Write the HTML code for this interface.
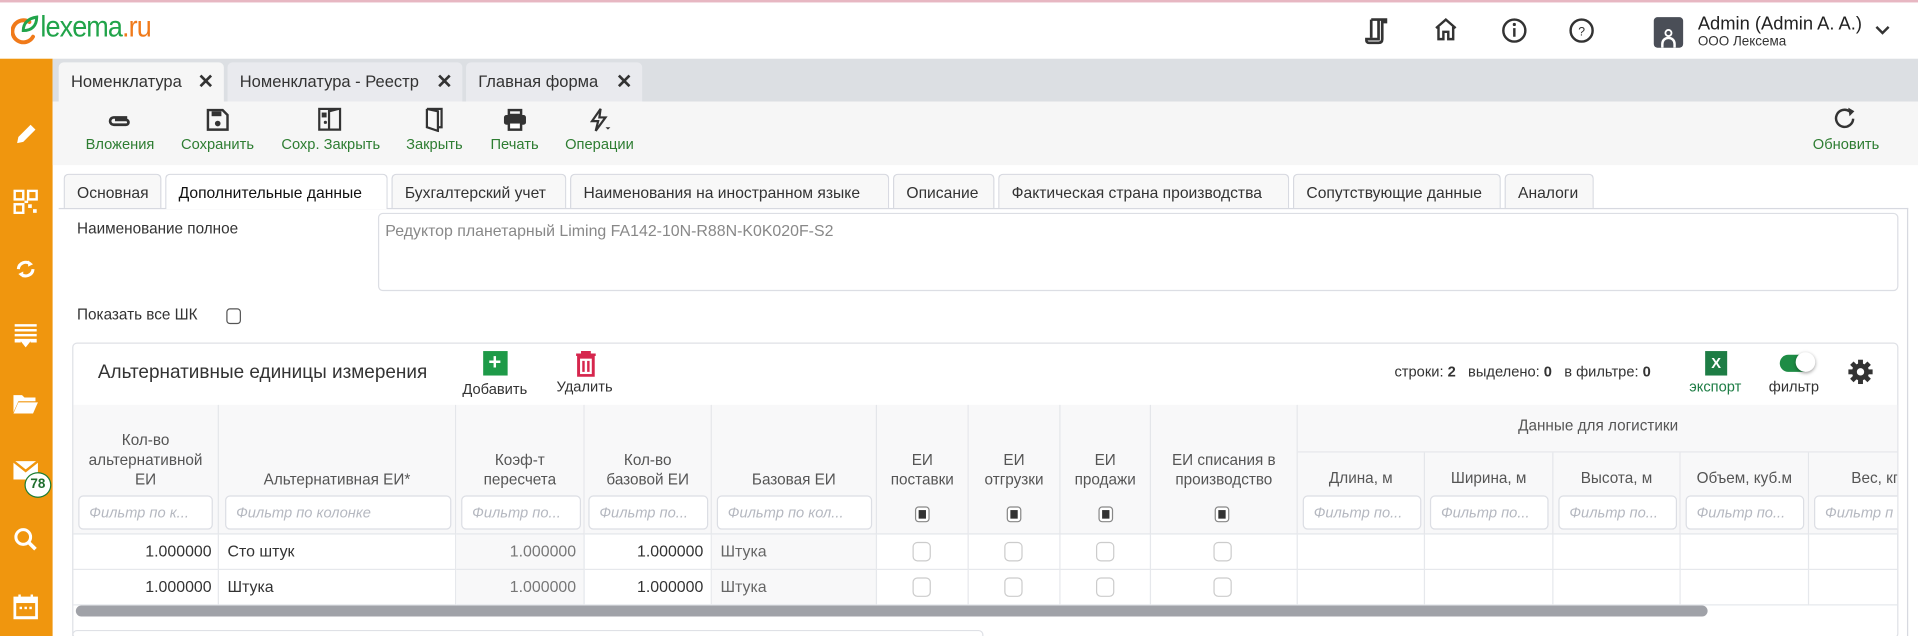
<!DOCTYPE html>
<html><head><meta charset="utf-8">
<style>
*{box-sizing:border-box;margin:0;padding:0}
html,body{width:1918px;height:636px;overflow:hidden;background:#fff;font-family:"Liberation Sans","Noto Sans CJK SC",sans-serif;color:#333}
#w{position:absolute;left:0;top:0;width:1568px;height:520px;transform:scale(1.22321);transform-origin:0 0;overflow:hidden}
.a{position:absolute}
.topline{left:0;top:0;width:1568px;height:2px;background:#e7b7c2}
.side{left:0;top:48px;width:43px;height:472px;background:#f0960e}
.tabbar{left:43px;top:48px;width:1525px;height:35px;background:#dcdfe3}
.tb{top:51px;height:32px;background:#e9eaee;border-radius:4px 4px 0 0;font-size:13.5px;color:#333;padding:8px 0 0 10px;white-space:nowrap}
.tb .x{position:absolute;right:8px;top:6px;font-size:16px;font-weight:bold;color:#333}
.tool{left:43px;top:83px;width:1525px;height:52px;background:#f6f6f6}
.tbtn{top:88px;text-align:center;font-size:12px;color:#2e7d32;white-space:nowrap}
.tbtn svg{display:block;margin:0 auto 3px}
.ct{top:142px;height:28px;border:1px solid #d7d9e0;border-bottom:none;border-radius:4px 4px 0 0;background:#f8f8f8;font-size:12.8px;color:#333;padding:7px 0 0 10px;white-space:nowrap}
.panel{left:48px;top:170px;width:1512px;height:360px;background:#fff;border-top:1px solid #d7d9e0;border-right:1px solid #d7d9e0}
.lbl{font-size:12.5px;color:#333}
.grid{left:59px;top:280px;width:1493px;height:242px;border:1px solid #dfe1e6;border-radius:4px;background:#fff;overflow:hidden}
.hc{position:absolute;background:#f8f8f9;border-right:1px solid #e4e6ea;border-bottom:1px solid #e4e6ea;font-size:12.5px;color:#555;text-align:center;line-height:16px}
.fi{position:absolute;height:28px;border:1px solid #dcdee4;border-radius:4px;background:#fff;font-size:12px;font-style:italic;color:#b5b8c0;padding:6px 0 0 8px;white-space:nowrap;overflow:hidden}
.cb{position:absolute;width:12px;height:13px;border:1px solid #888;border-radius:3px;background:#fff}
.cb i{position:absolute;left:2px;top:2px;width:6px;height:7px;background:#333}
.bc{position:absolute;border-right:1px solid #e6e8ec;border-bottom:1px solid #e6e8ec;font-size:13px;color:#333;padding-top:6px;height:29px}
.ec{position:absolute;width:15px;height:16px;border:1px solid #ccc;border-radius:4px;background:#fff}
</style></head><body><div id="w">
<div class="a topline"></div>
<!-- logo -->
<svg class="a" style="left:9px;top:12px" width="24" height="26" viewBox="0 0 24 26"><path d="M15 6a9 9 0 1 0 3 12" fill="none" stroke="#f07a1a" stroke-width="3.2" stroke-linecap="round"/><path d="M10 13c0-6 4-10 11-11 0 7-4 11-11 11z" fill="none" stroke="#21a44a" stroke-width="2.4"/></svg>
<div class="a" style="left:33px;top:9px;font-size:24px;letter-spacing:-0.8px;white-space:nowrap;transform:scaleX(0.92);transform-origin:0 0">
<span style="color:#21a44a">lexema</span><span style="color:#f07a1a">.ru</span></div>
<!-- header icons -->
<svg class="a" style="left:1116px;top:13px" width="20" height="24" viewBox="0 0 20 24"><path d="M5 3h12v2h-3v14c0 2-1 3-3 3H3c-1 0-2-1-2-2v-1h10V3" fill="none" stroke="#333" stroke-width="2.2"/><path d="M5 3v15" stroke="#333" stroke-width="2.2"/></svg>
<svg class="a" style="left:1171px;top:13px" width="22" height="22" viewBox="0 0 22 22"><path d="M3 10L11 3l8 7M5 9v10h4v-6h4v6h4V9" fill="none" stroke="#333" stroke-width="2"/></svg>
<svg class="a" style="left:1227px;top:14px" width="22" height="22" viewBox="0 0 22 22"><circle cx="11" cy="11" r="9" fill="none" stroke="#333" stroke-width="2"/><path d="M11 9v7" stroke="#333" stroke-width="2"/><circle cx="11" cy="6" r="1.3" fill="#333"/></svg>
<svg class="a" style="left:1282px;top:14px" width="22" height="22" viewBox="0 0 22 22"><circle cx="11" cy="11" r="9" fill="none" stroke="#333" stroke-width="2"/><text x="11" y="15" font-size="10" text-anchor="middle" fill="#333" font-family="Liberation Sans">?</text></svg>
<div class="a" style="left:1352px;top:14px;width:24px;height:25px;background:#4a4e57;border-radius:3px"><svg width="24" height="25"><circle cx="12" cy="13" r="2.5" fill="none" stroke="#fff" stroke-width="1.5"/><path d="M7 25v-3c0-3 2-5 5-5s5 2 5 5v3" fill="none" stroke="#fff" stroke-width="2"/></svg></div>
<div class="a" style="left:1388px;top:11px;font-size:15px;color:#222;white-space:nowrap">Admin (Admin A. A.)</div>
<div class="a" style="left:1388px;top:28px;font-size:11px;color:#333">ООО Лексема</div>
<svg class="a" style="left:1532px;top:20px" width="14" height="10"><path d="M2 2l5 5 5-5" fill="none" stroke="#333" stroke-width="2"/></svg>
<!-- sidebar -->
<div class="a side"></div>
<div class="a" style="left:0;top:48px;width:43px;color:#fff">
<svg class="a" style="left:11px;top:52px" width="20" height="20"><path d="M3 17l1-5L14 2l4 4L8 16z" fill="#fff"/></svg>
<svg class="a" style="left:11px;top:107px" width="20" height="20" fill="#fff"><rect x="1" y="1" width="7" height="7" fill="none" stroke="#fff" stroke-width="2"/><rect x="12" y="1" width="7" height="7" fill="none" stroke="#fff" stroke-width="2"/><rect x="1" y="12" width="7" height="7" fill="none" stroke="#fff" stroke-width="2"/><rect x="12" y="12" width="3" height="3"/><rect x="16" y="16" width="3" height="3"/><rect x="9" y="9" width="3" height="2"/></svg>
<svg class="a" style="left:11px;top:162px" width="20" height="20"><path d="M4 10a6 6 0 0 1 10-4M16 10a6 6 0 0 1-10 4" fill="none" stroke="#fff" stroke-width="2.5"/><path d="M12 3l4 3-4 2zM8 17l-4-3 4-2z" fill="#fff"/></svg>
<svg class="a" style="left:11px;top:216px" width="20" height="22" fill="#fff"><rect x="1" y="1" width="18" height="2"/><rect x="1" y="5" width="18" height="2"/><rect x="1" y="9" width="18" height="2"/><path d="M1 13h18v3h-5v-1h-8v1H1zM6 15h8l-4 5z"/></svg>
<svg class="a" style="left:10px;top:273px" width="22" height="18"><path d="M1 2h7l2 2h9v3H5L1 16z" fill="#fff"/><path d="M5 8h16l-4 9H1z" fill="#fff"/></svg>
<svg class="a" style="left:10px;top:328px" width="22" height="18"><rect x="1" y="1" width="20" height="15" fill="#fff"/><path d="M1 1l10 8 10-8" fill="none" stroke="#f0960e" stroke-width="2"/></svg>
<div class="a" style="left:20px;top:338px;width:22px;height:21px;border-radius:50%;background:#fff;border:1.5px solid #1e7d32;color:#1e6d2c;font-size:11px;font-weight:bold;text-align:center;line-height:18px">78</div>
<svg class="a" style="left:11px;top:383px" width="20" height="22"><circle cx="8" cy="8" r="6" fill="none" stroke="#fff" stroke-width="2.5"/><path d="M12 12l6 6" stroke="#fff" stroke-width="3"/></svg>
<svg class="a" style="left:11px;top:437px" width="20" height="22"><rect x="1" y="4" width="18" height="16" fill="none" stroke="#fff" stroke-width="2.5"/><rect x="1" y="4" width="18" height="4" fill="#fff"/><path d="M5 1v4M15 1v4" stroke="#fff" stroke-width="2"/><rect x="5" y="11" width="2" height="2" fill="#fff"/><rect x="9" y="11" width="2" height="2" fill="#fff"/><rect x="13" y="11" width="2" height="2" fill="#fff"/></svg>
</div>
<!-- tabbar -->
<div class="a tabbar"></div>
<div class="a tb" style="left:48px;width:135px;background:#f6f6f6">Номенклатура<span class="x">✕</span></div>
<div class="a tb" style="left:186px;width:192px">Номенклатура - Реестр<span class="x">✕</span></div>
<div class="a tb" style="left:381px;width:144px">Главная форма<span class="x">✕</span></div>
<!-- toolbar -->
<div class="a tool"></div>
<div class="a tbtn" style="left:70px"><svg width="24" height="20"><path d="M18 8H7a3 3 0 0 0 0 6h10a2 2 0 0 0 0-4H8" fill="none" stroke="#333" stroke-width="2.2"/></svg>Вложения</div>
<div class="a tbtn" style="left:148px"><svg width="22" height="20"><path d="M3 2h12l4 4v12H3z" fill="none" stroke="#333" stroke-width="2"/><rect x="6" y="3" width="8" height="4" fill="#333"/><circle cx="11" cy="13" r="2.3" fill="#333"/></svg>Сохранить</div>
<div class="a tbtn" style="left:230px"><svg width="22" height="20"><path d="M2 1h17v17H2z M10 1v17 M10 3l8-2" fill="none" stroke="#333" stroke-width="1.8"/><rect x="4" y="4" width="4" height="4" fill="#333"/><circle cx="7" cy="12" r="1.3" fill="#333"/></svg>Сохр. Закрыть</div>
<div class="a tbtn" style="left:332px"><svg width="22" height="20"><path d="M5 1h12v15h-3 M5 1v15l9 3V3L5 1" fill="none" stroke="#333" stroke-width="1.8"/></svg>Закрыть</div>
<div class="a tbtn" style="left:401px"><svg width="22" height="20"><rect x="6" y="2" width="10" height="4" fill="none" stroke="#333" stroke-width="2"/><rect x="2" y="6" width="18" height="8" rx="2" fill="#333"/><rect x="6" y="12" width="10" height="6" fill="#fff" stroke="#333" stroke-width="2"/></svg>Печать</div>
<div class="a tbtn" style="left:462px"><svg width="22" height="20"><path d="M12 1L5 11h5l-2 8 8-11h-5z" fill="none" stroke="#333" stroke-width="1.8"/><path d="M16 16h4l-2 2z" fill="#333"/></svg>Операции</div>
<div class="a tbtn" style="left:1482px"><svg width="22" height="20"><path d="M17 9a7 7 0 1 1-3-6" fill="none" stroke="#333" stroke-width="2"/><path d="M13 0l5 3-4 4z" fill="#333"/></svg>Обновить</div>
<!-- content tabs -->
<div class="a panel"></div>
<div class="a ct" style="left:52px;width:80px">Основная</div>
<div class="a ct" style="left:135px;width:182px;background:#fff;color:#111;height:29px">Дополнительные данные</div>
<div class="a ct" style="left:320px;width:143px">Бухгалтерский учет</div>
<div class="a ct" style="left:466px;width:261px">Наименования на иностранном языке</div>
<div class="a ct" style="left:730px;width:83px">Описание</div>
<div class="a ct" style="left:816px;width:238px">Фактическая страна производства</div>
<div class="a ct" style="left:1057px;width:170px">Сопутствующие данные</div>
<div class="a ct" style="left:1230px;width:73px">Аналоги</div>
<div class="a lbl" style="left:63px;top:180px">Наименование полное</div>
<div class="a" style="left:309px;top:174px;width:1243px;height:64px;border:1px solid #dcdee4;border-radius:4px;font-size:13px;color:#888;padding:6px 0 0 5px">Редуктор планетарный Liming FA142-10N-R88N-K0K020F-S2</div>
<div class="a lbl" style="left:63px;top:250px">Показать все ШК</div>
<div class="a" style="left:185px;top:252px;width:12px;height:13px;border:1px solid #555;border-radius:3px"></div>
<!-- grid -->
<div class="a grid">
<div class="a" style="left:20px;top:15px;font-size:15.5px;color:#333;white-space:nowrap">Альтернативные единицы измерения</div>
<div class="a" style="left:318px;top:6px;text-align:center;font-size:12px;color:#333"><div style="width:20px;height:20px;background:#1e9a48;margin:0 auto 4px;color:#fff;font-size:18px;line-height:19px;font-weight:bold">+</div>Добавить</div>
<svg class="a" style="left:410px;top:6px" width="18" height="21"><path d="M1 3h16M6 3V1h6v2" stroke="#d6264d" stroke-width="2" fill="none"/><rect x="3" y="5" width="12" height="15" fill="none" stroke="#d6264d" stroke-width="2.4"/><path d="M7 8v9M11 8v9" stroke="#d6264d" stroke-width="2"/></svg>
<div class="a" style="left:395px;top:28px;font-size:12px;color:#333">Удалить</div>
<div class="a" style="left:1080px;top:16px;font-size:12px;color:#333;white-space:nowrap">строки: <b>2</b> &nbsp; выделено: <b>0</b> &nbsp; в фильтре: <b>0</b></div>
<div class="a" style="left:1334px;top:6px;width:18px;height:20px;background:#1e7d45;color:#fff;font-size:12px;font-weight:bold;text-align:center;line-height:20px">X</div>
<div class="a" style="left:1321px;top:28px;font-size:12px;color:#1e7d45">экспорт</div>
<div class="a" style="left:1395px;top:9px;width:26px;height:14px;border-radius:7px;background:#1e8c45"></div>
<div class="a" style="left:1408px;top:7px;width:16px;height:16px;border-radius:50%;background:#fff;box-shadow:0 1px 3px rgba(0,0,0,.4)"></div>
<div class="a" style="left:1386px;top:28px;font-size:12px;color:#333">фильтр</div>
<svg class="a" style="left:1451px;top:13px" width="20" height="20" viewBox="0 0 20 20"><g fill="#333" transform="translate(10 10)"><rect x="-2" y="-10" width="4" height="20"/><rect x="-2" y="-10" width="4" height="20" transform="rotate(45)"/><rect x="-2" y="-10" width="4" height="20" transform="rotate(90)"/><rect x="-2" y="-10" width="4" height="20" transform="rotate(135)"/><circle r="7"/><circle r="3" fill="#fff"/></g></svg>
<div class="hc" style="left:0;top:50px;width:119px;height:106px;padding-top:21px">Кол-во<br>альтернативной<br>ЕИ</div>
<div class="hc" style="left:119px;top:50px;width:194px;height:106px;padding-top:53px">Альтернативная ЕИ*</div>
<div class="hc" style="left:313px;top:50px;width:105px;height:106px;padding-top:37px">Коэф-т<br>пересчета</div>
<div class="hc" style="left:418px;top:50px;width:104px;height:106px;padding-top:37px">Кол-во<br>базовой ЕИ</div>
<div class="hc" style="left:522px;top:50px;width:135px;height:106px;padding-top:53px">Базовая ЕИ</div>
<div class="hc" style="left:657px;top:50px;width:75px;height:106px;padding-top:37px">ЕИ<br>поставки</div>
<div class="hc" style="left:732px;top:50px;width:75px;height:106px;padding-top:37px">ЕИ<br>отгрузки</div>
<div class="hc" style="left:807px;top:50px;width:74px;height:106px;padding-top:37px">ЕИ<br>продажи</div>
<div class="hc" style="left:881px;top:50px;width:120px;height:106px;padding-top:37px">ЕИ списания в<br>производство</div>
<div class="hc" style="left:1001px;top:50px;width:492px;height:39px;padding-top:9px">Данные для логистики</div>
<div class="hc" style="left:1001px;top:89px;width:104px;height:67px;padding-top:13px">Длина, м</div>
<div class="hc" style="left:1105px;top:89px;width:105px;height:67px;padding-top:13px">Ширина, м</div>
<div class="hc" style="left:1210px;top:89px;width:104px;height:67px;padding-top:13px">Высота, м</div>
<div class="hc" style="left:1314px;top:89px;width:105px;height:67px;padding-top:13px">Объем, куб.м</div>
<div class="hc" style="left:1419px;top:89px;width:90px;height:67px;padding-top:13px;text-align:right;padding-right:16px">Вес, кг</div>
<div class="fi" style="left:4px;top:124px;width:110px">Фильтр по к...</div>
<div class="fi" style="left:124px;top:124px;width:185px">Фильтр по колонке</div>
<div class="fi" style="left:317px;top:124px;width:98px">Фильтр по...</div>
<div class="fi" style="left:421px;top:124px;width:98px">Фильтр по...</div>
<div class="fi" style="left:526px;top:124px;width:127px">Фильтр по кол...</div>
<div class="fi" style="left:1005px;top:124px;width:97px">Фильтр по...</div>
<div class="fi" style="left:1109px;top:124px;width:97px">Фильтр по...</div>
<div class="fi" style="left:1214px;top:124px;width:97px">Фильтр по...</div>
<div class="fi" style="left:1318px;top:124px;width:97px">Фильтр по...</div>
<div class="fi" style="left:1423px;top:124px;width:90px">Фильтр п</div>
<div class="cb" style="left:688px;top:133px"><i></i></div>
<div class="cb" style="left:763px;top:133px"><i></i></div>
<div class="cb" style="left:838px;top:133px"><i></i></div>
<div class="cb" style="left:933px;top:133px"><i></i></div>
<div class="bc" style="left:0;top:156px;width:119px;text-align:right;padding-right:5px">1.000000</div>
<div class="bc" style="left:119px;top:156px;width:194px;padding-left:7px">Сто штук</div>
<div class="bc" style="left:313px;top:156px;width:105px;text-align:right;padding-right:6px;background:#f8f8f9;color:#777">1.000000</div>
<div class="bc" style="left:418px;top:156px;width:104px;text-align:right;padding-right:6px">1.000000</div>
<div class="bc" style="left:522px;top:156px;width:135px;padding-left:7px;background:#f8f8f9;color:#666">Штука</div>
<div class="bc" style="left:657px;top:156px;width:75px"></div><div class="bc" style="left:732px;top:156px;width:75px"></div><div class="bc" style="left:807px;top:156px;width:74px"></div><div class="bc" style="left:881px;top:156px;width:120px"></div>
<div class="bc" style="left:1001px;top:156px;width:104px"></div><div class="bc" style="left:1105px;top:156px;width:105px"></div><div class="bc" style="left:1210px;top:156px;width:104px"></div><div class="bc" style="left:1314px;top:156px;width:105px"></div><div class="bc" style="left:1419px;top:156px;width:90px"></div>
<div class="bc" style="left:0;top:185px;width:119px;text-align:right;padding-right:5px">1.000000</div>
<div class="bc" style="left:119px;top:185px;width:194px;padding-left:7px">Штука</div>
<div class="bc" style="left:313px;top:185px;width:105px;text-align:right;padding-right:6px;background:#f8f8f9;color:#777">1.000000</div>
<div class="bc" style="left:418px;top:185px;width:104px;text-align:right;padding-right:6px">1.000000</div>
<div class="bc" style="left:522px;top:185px;width:135px;padding-left:7px;background:#f8f8f9;color:#666">Штука</div>
<div class="bc" style="left:657px;top:185px;width:75px"></div><div class="bc" style="left:732px;top:185px;width:75px"></div><div class="bc" style="left:807px;top:185px;width:74px"></div><div class="bc" style="left:881px;top:185px;width:120px"></div>
<div class="bc" style="left:1001px;top:185px;width:104px"></div><div class="bc" style="left:1105px;top:185px;width:105px"></div><div class="bc" style="left:1210px;top:185px;width:104px"></div><div class="bc" style="left:1314px;top:185px;width:105px"></div><div class="bc" style="left:1419px;top:185px;width:90px"></div>
<div class="ec" style="left:686px;top:162px"></div><div class="ec" style="left:761px;top:162px"></div><div class="ec" style="left:836px;top:162px"></div><div class="ec" style="left:932px;top:162px"></div>
<div class="ec" style="left:686px;top:191px"></div><div class="ec" style="left:761px;top:191px"></div><div class="ec" style="left:836px;top:191px"></div><div class="ec" style="left:932px;top:191px"></div>
<div class="a" style="left:2px;top:214px;width:1334px;height:9px;border-radius:5px;background:#a0a2a8"></div>
</div>
<div class="a" style="left:59px;top:515px;width:745px;height:10px;border:1px solid #dfe1e6;border-radius:4px"></div>
</div></body></html>
